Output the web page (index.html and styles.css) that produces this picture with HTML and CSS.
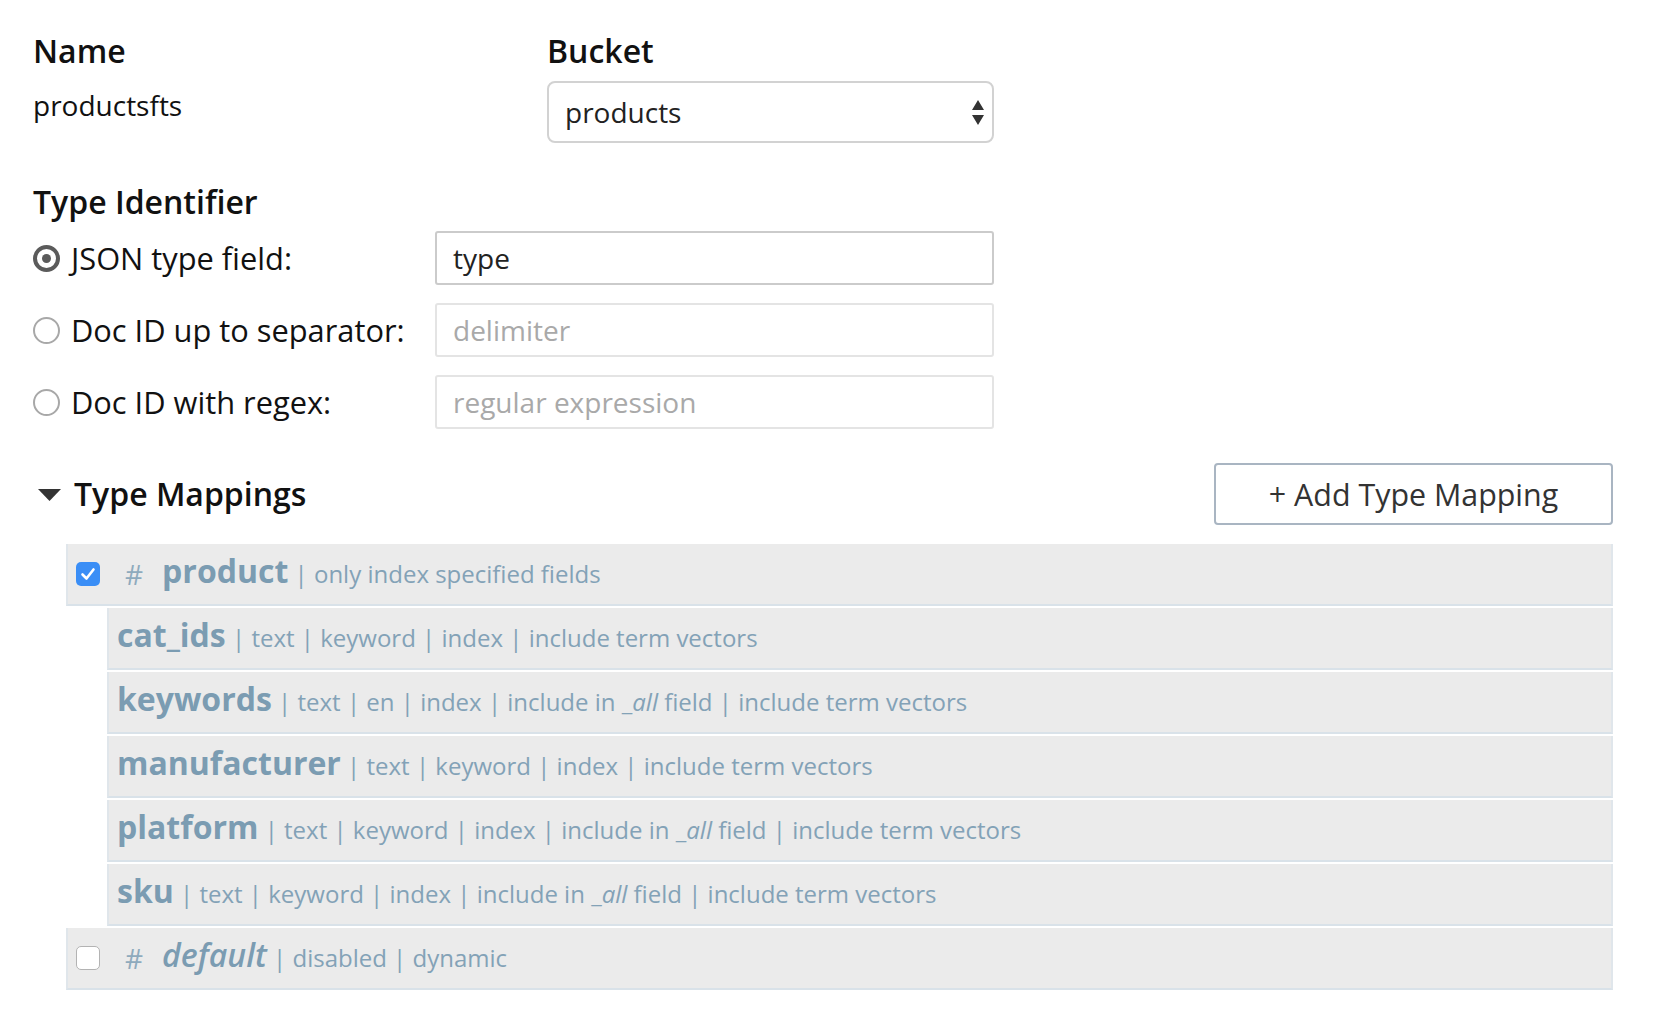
FILE: index.html
```html
<!DOCTYPE html>
<html lang="en">
<head>
<meta charset="utf-8">
<title>Index definition</title>
<link rel="stylesheet" href="styles.css">
</head>
<body>
<div class="page">
  <div class="top">
    <div class="col-name">
      <div class="heading">Name</div>
      <div class="name-value">productsfts</div>
    </div>
    <div class="col-bucket">
      <div class="heading">Bucket</div>
      <div class="select">
        <span>products</span>
        <svg class="select-arrows" width="12" height="25" viewBox="0 0 12 25"><path d="M6 0L12 10H0Z M0 15H12L6 25Z" fill="#333"/></svg>
      </div>
    </div>
  </div>

  <div class="heading section-head">Type Identifier</div>
  <div class="radio-group">
    <div class="radio-row">
      <label class="radio-label"><span class="radio checked"></span>JSON type field:</label>
      <div class="input">type</div>
    </div>
    <div class="radio-row">
      <label class="radio-label"><span class="radio"></span>Doc ID up to separator:</label>
      <div class="input disabled">delimiter</div>
    </div>
    <div class="radio-row">
      <label class="radio-label"><span class="radio"></span>Doc ID with regex:</label>
      <div class="input disabled">regular expression</div>
    </div>
  </div>

  <div class="mappings-head">
    <div class="mappings-title">
      <svg class="caret" width="23" height="12" viewBox="0 0 23 12"><path d="M0 0H23L11.5 12Z" fill="#333"/></svg>
      <span class="heading">Type Mappings</span>
    </div>
    <div class="add-btn">+ Add Type Mapping</div>
  </div>

  <div class="mappings">
    <div class="row type-row">
      <span class="checkbox checked"><svg width="24" height="24" viewBox="0 0 24 24"><path d="M6.5 12.5L10.5 16.5L17.5 7.5" fill="none" stroke="#fff" stroke-width="2.6" stroke-linecap="round" stroke-linejoin="round"/></svg></span>
      <span class="hash">#</span>
      <span class="line"><span class="fname">product</span><span class="meta"> | only index specified fields</span></span>
    </div>
    <div class="row field-row">
      <span class="line"><span class="fname">cat_ids</span><span class="meta"> | text | keyword | index | include term vectors</span></span>
    </div>
    <div class="row field-row">
      <span class="line"><span class="fname">keywords</span><span class="meta"> | text | en | index | include in _<i>all</i> field | include term vectors</span></span>
    </div>
    <div class="row field-row">
      <span class="line"><span class="fname">manufacturer</span><span class="meta"> | text | keyword | index | include term vectors</span></span>
    </div>
    <div class="row field-row">
      <span class="line"><span class="fname">platform</span><span class="meta"> | text | keyword | index | include in _<i>all</i> field | include term vectors</span></span>
    </div>
    <div class="row field-row">
      <span class="line"><span class="fname">sku</span><span class="meta"> | text | keyword | index | include in _<i>all</i> field | include term vectors</span></span>
    </div>
    <div class="row type-row">
      <span class="checkbox"></span>
      <span class="hash">#</span>
      <span class="line"><span class="fname italic">default</span><span class="meta"> | disabled | dynamic</span></span>
    </div>
  </div>
</div>
</body>
</html>
```

FILE: styles.css
```css
html, body {
  margin: 0;
  padding: 0;
  background: #ffffff;
}

body {
  font-family: "Open Sans", "Liberation Sans", sans-serif;
  color: #111;
}

.page {
  width: 1580px;
  padding: 31px 0 0 33px;
}

.heading {
  font-size: 32px;
  line-height: 40px;
  font-weight: 600;
  color: #111;
}

.top {
  display: flex;
}

.col-name {
  width: 514px;
}

.col-bucket {
  width: 447px;
}

.name-value {
  font-size: 28px;
  line-height: 40px;
  margin-top: 14px;
  color: #111;
}

.select {
  margin-top: 10px;
  box-sizing: border-box;
  height: 62px;
  border: 2px solid #d2d2d2;
  border-radius: 8px;
  display: flex;
  align-items: center;
  justify-content: space-between;
  padding: 0 8px 0 16px;
  font-size: 28px;
  color: #222;
  background: #fff;
}

.select-arrows {
  display: block;
}

.section-head {
  margin-top: 39px;
}

.radio-group {
  margin-top: 9px;
  display: flex;
  flex-direction: column;
  gap: 18px;
}

.radio-row {
  display: flex;
  align-items: center;
  height: 54px;
}

.radio-label {
  width: 402px;
  display: flex;
  align-items: center;
  gap: 11px;
  font-size: 30.8px;
  color: #111;
}

.radio {
  box-sizing: border-box;
  width: 27px;
  height: 27px;
  border-radius: 50%;
  border: 2px solid #a8a8a8;
  background: #fff;
  flex: none;
  position: relative;
}

.radio.checked {
  border: 4px solid #5b5b5b;
}

.radio.checked::after {
  content: "";
  position: absolute;
  left: 50%;
  top: 50%;
  width: 9px;
  height: 9px;
  margin: -4.5px 0 0 -4.5px;
  border-radius: 50%;
  background: #5b5b5b;
}

.input {
  box-sizing: border-box;
  width: 559px;
  height: 54px;
  border: 2px solid #cbcbcb;
  border-radius: 3px;
  padding: 0 16px;
  display: flex;
  align-items: center;
  font-size: 28px;
  color: #222;
}

.input.disabled {
  border-color: #e4e4e4;
  color: #a9a9a9;
}

.mappings-head {
  margin-top: 34px;
  display: flex;
  align-items: center;
  justify-content: space-between;
}

.mappings-title {
  display: flex;
  align-items: center;
  gap: 13px;
  margin-left: 5px;
}

.caret {
  display: block;
  margin-top: 2px;
}

.add-btn {
  box-sizing: border-box;
  width: 399px;
  height: 62px;
  border: 2px solid #a9b5c2;
  border-radius: 4px;
  display: flex;
  align-items: center;
  justify-content: center;
  font-size: 30.4px;
  color: #333;
  background: #fff;
}

.mappings {
  margin-top: 19px;
  margin-left: 33px;
  display: flex;
  flex-direction: column;
  gap: 2px;
}

.row {
  box-sizing: border-box;
  height: 62px;
  background: #ebebeb;
  border-left: 2px solid #e0e6eb;
  border-right: 2px solid #e0e6eb;
  border-bottom: 2px solid #d9e2e9;
  display: flex;
  align-items: center;
  padding-left: 8px;
  white-space: nowrap;
  overflow: hidden;
}

.field-row {
  margin-left: 41px;
}

.checkbox {
  box-sizing: border-box;
  width: 24px;
  height: 24px;
  border-radius: 5px;
  border: 1.5px solid #b3b3b3;
  background: #fff;
  flex: none;
  display: flex;
  align-items: center;
  justify-content: center;
}

.checkbox.checked {
  border: none;
  background: #3a8ef6;
}

.checkbox svg {
  display: block;
}

.hash {
  font-size: 28px;
  color: #8eaabd;
  margin-left: 25px;
  margin-right: 19px;
  line-height: 40px;
}

.line {
  line-height: 44px;
}

.fname {
  font-size: 32px;
  font-weight: 700;
  color: #7b9cb2;
}

.fname.italic {
  font-style: italic;
  font-weight: 600;
}

.meta {
  font-size: 24px;
  color: #83a2b7;
  white-space: pre;
}

.meta i {
  font-style: italic;
}
```
